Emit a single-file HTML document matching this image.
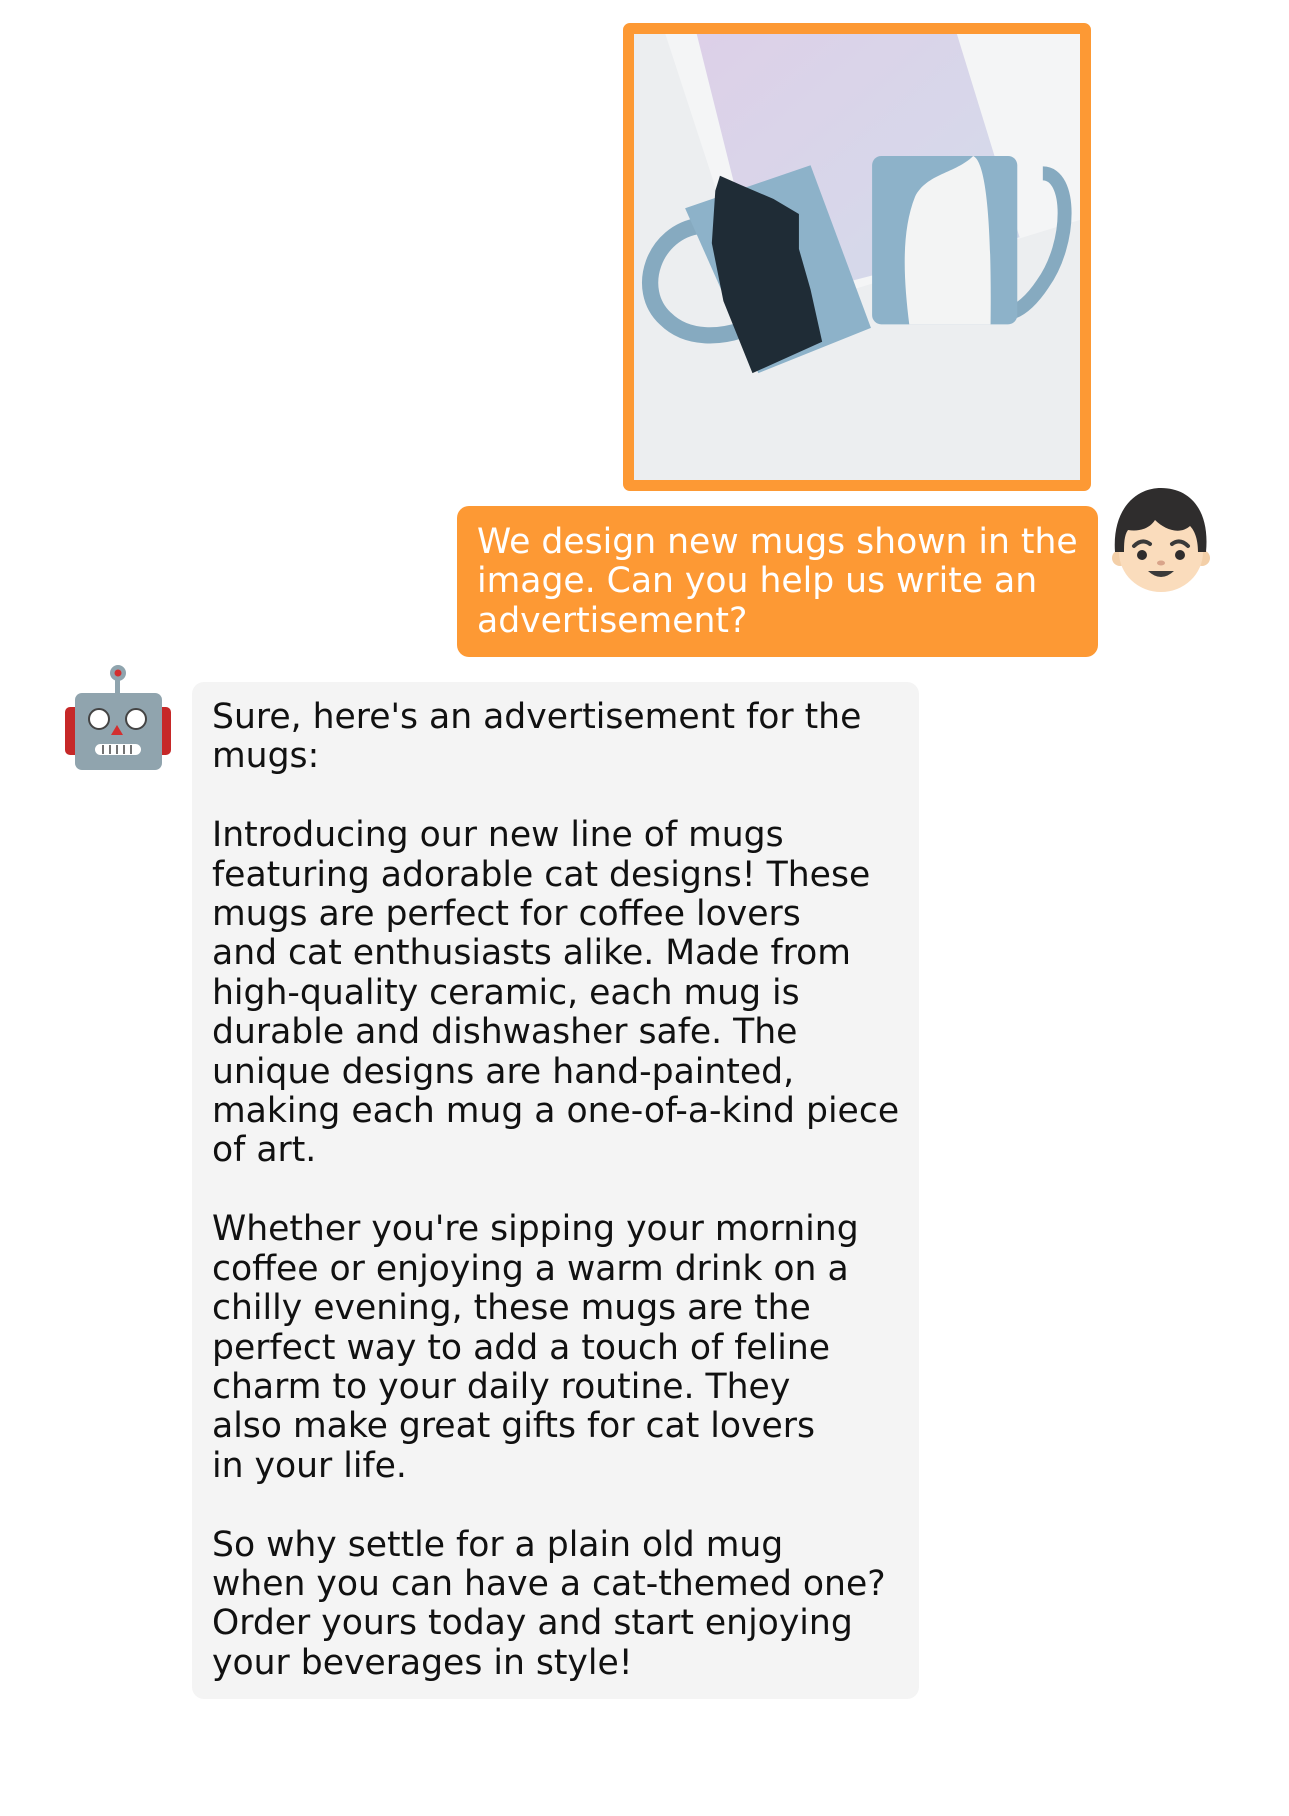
<!DOCTYPE html>
<html><head><meta charset="utf-8"><style>
html,body{margin:0;padding:0;background:#fff;width:1289px;height:1816px;overflow:hidden;position:relative;font-family:"DejaVu Sans","Liberation Sans",sans-serif;}
.abs{position:absolute}
.photo{left:623px;top:23px;width:446px;height:446px;border:11px solid #fd9934;border-radius:7px;overflow:hidden}
.user{left:457px;top:506px;width:603px;height:118px;padding:17px 18px 16px 20px;background:#fd9934;border-radius:12px;color:#fff;font-size:34.6px;line-height:39.4px;white-space:pre}
.bot{left:192px;top:682px;width:707px;height:985px;padding:16px 0 16px 20px;background:#f4f4f4;border-radius:12px;color:#111;font-size:34.6px;line-height:39.4px;white-space:pre}
</style></head><body>
<div class="abs photo"><svg width="446" height="446" viewBox="548 30 384 384" preserveAspectRatio="none">
<defs><linearGradient id="pg" x1="0" y1="0" x2="1" y2="1"><stop offset="0" stop-color="#ddd0e8"/><stop offset="1" stop-color="#d3dceb"/></linearGradient></defs>
<rect x="548" y="30" width="384" height="384" fill="#eceef0"/>
<polygon points="575,30 932,30 932,190 655,275" fill="#f4f5f6"/>
<polygon points="602,30 826,30 880,205 660,262" fill="url(#pg)"/>
<path d="M605 195 C565 200,548 250,575 275 C595 295,625 290,640 285" fill="none" stroke="#86aac0" stroke-width="14"/>
<polygon points="592,180 700,143 752,283 655,322" fill="#8db2c9"/>
<polygon points="618,165 622,152 640,160 668,172 690,185 690,215 700,250 710,295 650,322 625,260 615,210" fill="#1f2c36"/>
<path d="M900 150 C925 150,925 210,900 245 C890 260,880 268,872 270" fill="none" stroke="#86aac0" stroke-width="12"/>
<rect x="753" y="135" width="125" height="145" rx="8" fill="#8db2c9"/>
<path d="M790 170 C800 150,825 150,840 135 C852 140,856 200,855 280 L785 280 C780 240,778 200,790 170Z" fill="#f3f4f4"/>
</svg></div>
<div class="abs user">We design new mugs shown in the
image. Can you help us write an
advertisement?</div>
<svg class="abs" style="left:1110px;top:480px" width="130" height="130" viewBox="0 0 130 130">
<circle cx="10" cy="78" r="8" fill="#f3cfa8"/><circle cx="92" cy="78" r="8" fill="#f3cfa8"/>
<ellipse cx="51" cy="72" rx="42" ry="40" fill="#fadcbc"/>
<path d="M5 72 C2 30,25 8,51 8 C80 8,100 30,96 72 L88 72 C88 58,84 50,80 46 C70 55,55 50,45 40 C40 48,30 52,18 50 C14 55,14 65,14 72Z" fill="#2f2d2d"/>
<path d="M24 66 Q32 58,40 64" stroke="#3a3a3a" stroke-width="4" fill="none" stroke-linecap="round"/>
<path d="M62 64 Q70 58,78 66" stroke="#3a3a3a" stroke-width="4" fill="none" stroke-linecap="round"/>
<circle cx="32" cy="75" r="5" fill="#2f2d2d"/><circle cx="70" cy="75" r="5" fill="#2f2d2d"/>
<ellipse cx="51" cy="83" rx="4" ry="2.5" fill="#d9a48a"/>
<path d="M38 91 Q51 103,64 91 Z" fill="#3a3a3a"/>
</svg>
<svg class="abs" style="left:55px;top:660px" width="130" height="130" viewBox="0 0 130 130">
<rect x="60" y="14" width="5" height="22" fill="#8fa4ae"/>
<circle cx="63" cy="13" r="8" fill="#8fa4ae"/><circle cx="63" cy="13" r="3.5" fill="#d32f2f"/>
<rect x="10" y="47" width="16" height="48" rx="5" fill="#c62828"/>
<rect x="100" y="47" width="16" height="48" rx="5" fill="#c62828"/>
<rect x="20" y="33" width="87" height="77" rx="7" fill="#90a4ae"/>
<circle cx="44" cy="59" r="10" fill="#fff" stroke="#444" stroke-width="2"/>
<circle cx="81" cy="59" r="10" fill="#fff" stroke="#444" stroke-width="2"/>
<polygon points="62,65 68,75 56,75" fill="#d32f2f"/>
<rect x="40" y="84" width="46" height="11" rx="5.5" fill="#fff"/>
<path d="M48 85V94M55 85V94M62 85V94M69 85V94M76 85V94" stroke="#444" stroke-width="1.5"/>
</svg>
<div class="abs bot">Sure, here's an advertisement for the
mugs:

Introducing our new line of mugs
featuring adorable cat designs! These
mugs are perfect for coffee lovers
and cat enthusiasts alike. Made from
high-quality ceramic, each mug is
durable and dishwasher safe. The
unique designs are hand-painted,
making each mug a one-of-a-kind piece
of art.

Whether you're sipping your morning
coffee or enjoying a warm drink on a
chilly evening, these mugs are the
perfect way to add a touch of feline
charm to your daily routine. They
also make great gifts for cat lovers
in your life.

So why settle for a plain old mug
when you can have a cat-themed one?
Order yours today and start enjoying
your beverages in style!</div>
</body></html>
